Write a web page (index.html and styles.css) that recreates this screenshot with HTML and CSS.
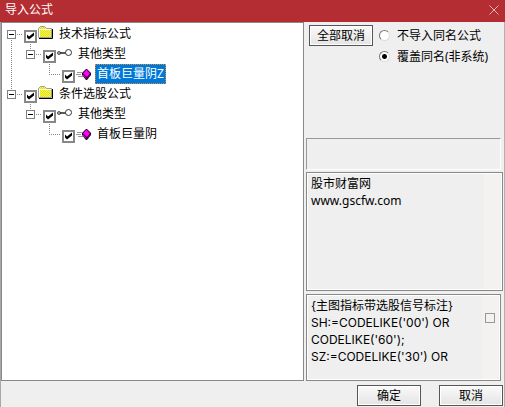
FILE: index.html
```html
<!DOCTYPE html>
<html lang="zh-CN">
<head>
    <meta charset="UTF-8">
    <meta name="viewport" content="width=device-width, initial-scale=1.0">
    <title>导入公式</title>
    <link rel="stylesheet" href="styles.css">
</head>
<body>
    <svg class="symbols" aria-hidden="true">
        <pattern id="mesh" width="2" height="2" patternUnits="userSpaceOnUse">
            <path d="M0 0H2V2H0Z" fill="#ffff00"/>
            <path d="M0 0H1V1H0ZM1 1H2V2H1Z" fill="#d8d860"/>
        </pattern>
        <symbol id="folder" viewBox="0 0 16 16">
            <path d="M0.500 11.500V2.500L2.500 0.500H6.500L8.500 2.500H13.500V11.500Z" fill="url(#mesh)" stroke="#a0a090"/>
            <path d="M1 3.500H13M1.500 4V11" stroke="#fff" fill="none"/>
            <path d="M1 12.500H14.500V3" fill="none" stroke="#000"/>
        </symbol>
        <symbol id="link" viewBox="0 0 16 16">
            <circle cx="2" cy="7" r="1.500" fill="#aaa" stroke="#555"/>
            <path d="M3 7H9" stroke="#222" stroke-width="1.500" fill="none"/>
            <circle cx="11.500" cy="6.500" r="3" fill="#fff" stroke="#333"/>
        </symbol>
        <symbol id="formula" viewBox="0 0 16 16">
            <path d="M1 6.500H6M0 8.500H5M2 10.500H7" stroke="#999" fill="none"/>
            <path d="M10 3H11L15 7V9L11 14H10L6 9V7Z" fill="#202"/>
            <path d="M10.500 3.500L14 7.500L11 11L7 7.500Z" fill="#f0f"/>
            <path d="M7 8.500L10.500 12V13L7 9.500Z" fill="#e0e"/>
            <path d="M11.500 12V13L14 9.500V8.500Z" fill="#808"/>
        </symbol>
    </svg>
    <div class="dialog">
        <header class="titlebar">
            <h1>导入公式</h1>
            <button class="close" aria-label="关闭">
                <svg viewBox="0 0 10 10"><path d="M0.500 0.500L9.500 9.500M9.500 0.500L0.500 9.500"/></svg>
            </button>
        </header>
        <main class="content">
            <ul class="tree">
                <li>
                    <div class="row">
                        <span class="branch"><button class="toggle" aria-label="折叠"></button></span>
                        <label><input type="checkbox" checked><svg class="icon"><use href="#folder"/></svg><span class="name">技术指标公式</span></label>
                    </div>
                    <ul>
                        <li>
                            <div class="row">
                                <span class="branch"><button class="toggle" aria-label="折叠"></button></span>
                                <label><input type="checkbox" checked><svg class="icon"><use href="#link"/></svg><span class="name">其他类型</span></label>
                            </div>
                            <ul>
                                <li>
                                    <div class="row">
                                        <span class="branch"></span>
                                        <label><input type="checkbox" checked><svg class="icon"><use href="#formula"/></svg><span class="name selected">首板巨量阴Z</span></label>
                                    </div>
                                </li>
                            </ul>
                        </li>
                    </ul>
                </li>
                <li>
                    <div class="row">
                        <span class="branch"><button class="toggle" aria-label="折叠"></button></span>
                        <label><input type="checkbox" checked><svg class="icon"><use href="#folder"/></svg><span class="name">条件选股公式</span></label>
                    </div>
                    <ul>
                        <li>
                            <div class="row">
                                <span class="branch"><button class="toggle" aria-label="折叠"></button></span>
                                <label><input type="checkbox" checked><svg class="icon"><use href="#link"/></svg><span class="name">其他类型</span></label>
                            </div>
                            <ul>
                                <li>
                                    <div class="row">
                                        <span class="branch"></span>
                                        <label><input type="checkbox" checked><svg class="icon"><use href="#formula"/></svg><span class="name">首板巨量阴</span></label>
                                    </div>
                                </li>
                            </ul>
                        </li>
                    </ul>
                </li>
            </ul>
            <div class="side">
                <div class="options">
                    <button class="button">全部取消</button>
                    <div class="choices">
                        <label><input type="radio" name="same"><span>不导入同名公式</span></label>
                        <label><input type="radio" name="same" checked><span>覆盖同名(非系统)</span></label>
                    </div>
                </div>
                <div class="status"></div>
                <div class="field note">
                    <textarea aria-label="公式说明" readonly>股市财富网
www.gscfw.com</textarea>
                    <div class="track"></div>
                </div>
                <div class="field source">
                    <textarea aria-label="公式源码" readonly>{主图指标带选股信号标注}
SH:=CODELIKE('00') OR
CODELIKE('60');
SZ:=CODELIKE('30') OR</textarea>
                    <div class="track"><span class="thumb"></span></div>
                </div>
            </div>
        </main>
        <footer class="actions">
            <button class="button">确定</button>
            <button class="button">取消</button>
        </footer>
    </div>
</body>
</html>
```

FILE: styles.css
```css
* {
    box-sizing: border-box;
}
body {
    margin: 0;
    font-family: "Noto Sans", "Noto Sans CJK SC", sans-serif;
    font-size: 12px;
    color: #000;
    background: #efefef;
}
button, textarea {
    font: inherit;
    color: inherit;
}
.symbols {
    position: absolute;
    width: 0;
    height: 0;
}
.dialog {
    display: flex;
    flex-direction: column;
    min-height: 100vh;
    border-right: 1px solid #b0b0b0;
    border-left: 1px solid #a8a8a8;
}
.titlebar {
    display: flex;
    align-items: center;
    justify-content: space-between;
    height: 22px;
    margin: 0 -1px;
    padding: 0 6px 2px 5px;
    background: #b42d32;
    color: #fff;
}
.titlebar h1 {
    margin: 0;
    font-size: 12px;
    font-weight: 400;
    line-height: 20px;
}
.close {
    display: flex;
    padding: 0;
    border: none;
    background: none;
}
.close svg {
    width: 10px;
    height: 10px;
    fill: none;
    stroke: #e5b5b7;
}
.content {
    display: flex;
    flex: 1;
    gap: 2px;
}

/* tree */
.tree {
    flex: 1;
    min-width: 0;
    background: #fff;
    border: 1px solid #888;
}
.tree, .tree ul {
    margin: 0;
    padding: 0;
    list-style: none;
}
.tree {
    padding: 1px 5px;
}
.tree ul {
    padding-left: 19px;
}
.row {
    display: flex;
    align-items: center;
    height: 20px;
}
.branch {
    display: flex;
    align-items: center;
    width: 17px;
    height: 20px;
    background:
        repeating-linear-gradient(to right, #888 0 1px, transparent 1px 2px) 4px 10px / 11px 1px no-repeat,
        repeating-linear-gradient(to bottom, #888 0 1px, transparent 1px 2px) 4px 0 / 1px 10px no-repeat;
}
.tree > li:first-child > .row > .branch {
    background-position: 4px 10px, 4px 10px;
}
.tree > li:first-child > ul {
    background: repeating-linear-gradient(to bottom, #888 0 1px, transparent 1px 2px) 4px 0 / 1px 100% no-repeat;
}
.toggle {
    width: 9px;
    height: 9px;
    padding: 0;
    border: 1px solid #808080;
    background: linear-gradient(#000, #000) center / 5px 1px no-repeat #fff;
}
.row label {
    display: flex;
    align-items: center;
}
input {
    appearance: none;
    flex: none;
    margin: 0;
    background: #fff;
}
.row input {
    width: 13px;
    height: 13px;
    margin-top: 4px;
    border: 2px solid #888;
}
.row input:checked::before {
    content: "";
    display: block;
    width: 9px;
    height: 9px;
    background: #000;
    clip-path: polygon(1px 3px, 3px 5px, 8px 1px, 8px 4px, 3px 8px, 1px 6px);
}
.icon {
    width: 16px;
    height: 16px;
    margin-left: 1px;
}
.name {
    height: 20px;
    margin-left: 3px;
    padding: 0 1px;
    border: 1px solid transparent;
    line-height: 17px;
}
.selected {
    background: #0078d7;
    border: 1px dotted #d98b3a;
    color: #fff;
}

/* right column */
.side {
    display: flex;
    flex-direction: column;
    width: 198px;
    padding-right: 1px;
}
.options {
    display: flex;
    align-items: flex-start;
    flex: 1;
    gap: 6px;
    padding: 3px;
}
.button {
    width: 64px;
    height: 21px;
    padding: 0;
    border: 1px solid #555;
    background: linear-gradient(#fafafa, #e4e4e4);
    box-shadow: inset 0 0 0 1px #fff;
    line-height: 18px;
}
.choices label {
    display: flex;
    align-items: center;
    gap: 7px;
    height: 21px;
    line-height: 20px;
    white-space: nowrap;
}
.choices input {
    width: 11px;
    height: 11px;
    border: 1px solid;
    border-color: #777 #ddd #ddd #777;
    border-radius: 50%;
}
.choices input:checked {
    background: radial-gradient(circle, #000 2px, #fff 3px);
}
.status {
    height: 32px;
    margin: 0 2px 2px 0;
    border: 1px solid;
    border-color: #999 #fff #fff #999;
}
.field {
    display: flex;
    border: 1px solid #888;
    box-shadow: inset 0 0 0 1px #fff;
}
.note {
    height: 119px;
    margin-bottom: 3px;
}
.source {
    height: 87px;
    margin-right: 2px;
}
.field textarea {
    flex: 1;
    min-width: 0;
    padding: 2px 0 0 4px;
    border: none;
    outline: none;
    resize: none;
    overflow: hidden;
    background: none;
    line-height: 17px;
}
.source textarea {
    font-family: Inter, "Noto Sans CJK SC", sans-serif;
}
.track {
    display: flex;
    justify-content: center;
    width: 16px;
    margin: 1px 2px 1px 0;
    padding-top: 17px;
    background: #f3f2f1;
}
.thumb {
    width: 10px;
    height: 10px;
    border: 1px solid #999;
}
.actions {
    display: flex;
    justify-content: flex-end;
    gap: 18px;
    padding: 4px 1px 1px;
}
```
